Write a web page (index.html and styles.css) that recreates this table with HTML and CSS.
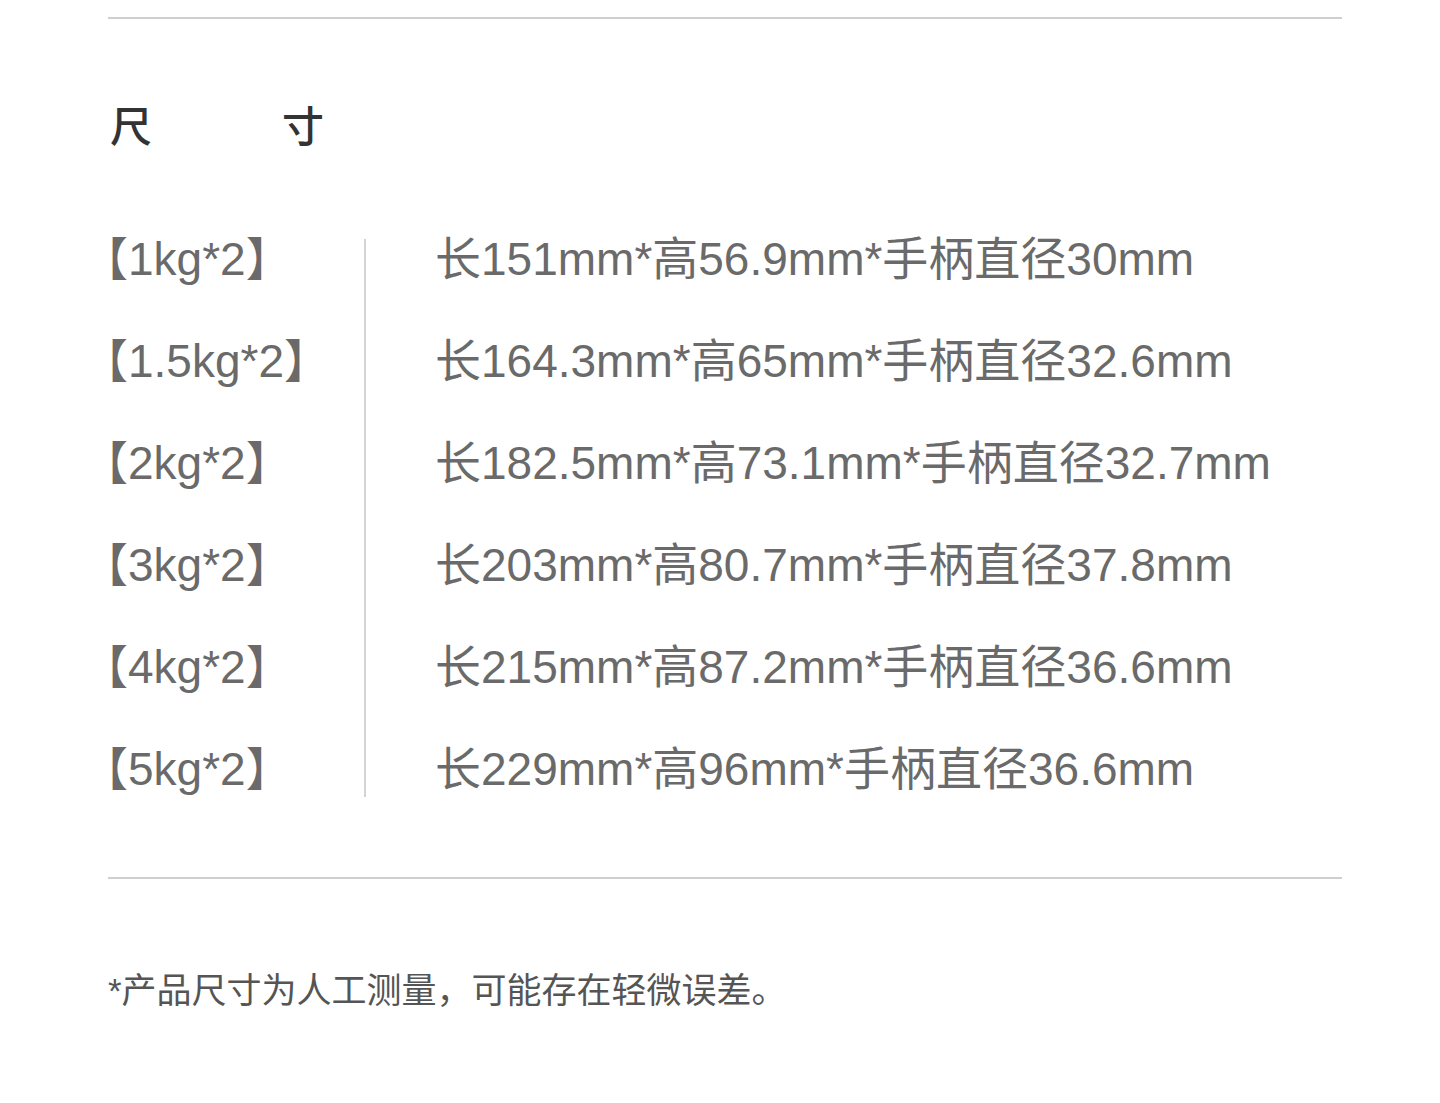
FILE: index.html
```html
<!DOCTYPE html>
<html lang="zh-CN">
<head>
<meta charset="utf-8">
<link rel="stylesheet" href="styles.css">
</head>
<body>
<div class="page">
  <hr class="rule">
  <h1 class="title"><span>尺</span><span>寸</span></h1>
  <div class="spec">
    <div class="labels">
      <div class="row">【1kg*2】</div>
      <div class="row">【1.5kg*2】</div>
      <div class="row">【2kg*2】</div>
      <div class="row">【3kg*2】</div>
      <div class="row">【4kg*2】</div>
      <div class="row">【5kg*2】</div>
    </div>
    <div class="divider"></div>
    <div class="values">
      <div class="row">长151mm*高56.9mm*手柄直径30mm</div>
      <div class="row">长164.3mm*高65mm*手柄直径32.6mm</div>
      <div class="row">长182.5mm*高73.1mm*手柄直径32.7mm</div>
      <div class="row">长203mm*高80.7mm*手柄直径37.8mm</div>
      <div class="row">长215mm*高87.2mm*手柄直径36.6mm</div>
      <div class="row">长229mm*高96mm*手柄直径36.6mm</div>
    </div>
  </div>
  <hr class="rule rule-bottom">
  <p class="note">*产品尺寸为人工测量，可能存在轻微误差。</p>
</div>
</body>
</html>
```
FILE: styles.css
```css
html, body {
  margin: 0;
  padding: 0;
  background: #ffffff;
}
body {
  font-family: "Liberation Sans", "Noto Sans CJK SC", sans-serif;
  color: #6a6a6a;
}
.page {
  width: 1234px;
  margin-left: 108px;
  padding-top: 17px;
}
.rule {
  border: 0;
  height: 2px;
  background: #cfcfcf;
  margin: 0;
}
.title {
  margin: 78px 0 0 2px;
  font-family: "Noto Sans CJK SC", sans-serif;
  font-size: 42px;
  line-height: 54px;
  font-weight: 500;
  color: #333333;
  display: flex;
  gap: 130px;
}
.spec {
  display: flex;
  margin-top: 57px;
}
.labels {
  width: 256px;
}
.row {
  height: 102px;
  line-height: 102px;
  font-size: 46px;
  white-space: nowrap;
}
.labels .row {
  margin-left: -26px;
}
.divider {
  width: 2px;
  background: #d4d4d4;
  height: 558px;
  margin-top: 31px;
}
.values {
  padding-left: 69px;
}
.rule-bottom {
  margin-top: 57px;
}
.note {
  margin: 92px 0 0 0;
  font-size: 35px;
  line-height: 40px;
  color: #555555;
}
```
